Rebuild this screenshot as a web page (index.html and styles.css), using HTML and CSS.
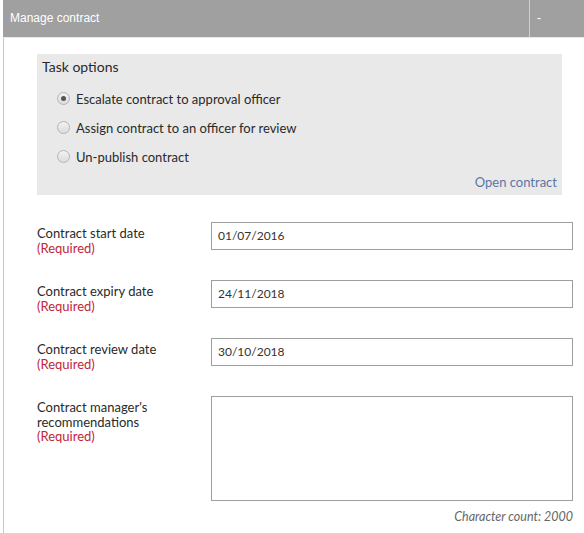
FILE: index.html
```html
<!DOCTYPE html>
<html>
<head>
<meta charset="utf-8">
<link rel="stylesheet" href="styles.css">
</head>
<body>
<div class="page">
  <div class="header">
    <div class="title">Manage contract</div>
    <div class="toggle">-</div>
  </div>
  <div class="content">
    <div class="panel">
      <div class="panel-title">Task options</div>
      <label class="option"><span class="radio checked"></span>Escalate contract to approval officer</label>
      <label class="option"><span class="radio"></span>Assign contract to an officer for review</label>
      <label class="option"><span class="radio"></span>Un-publish contract</label>
      <div class="panel-foot"><a class="link">Open contract</a></div>
    </div>
    <div class="rows">
      <div class="row">
        <div class="label">Contract start date<div class="req">(Required)</div></div>
        <div class="field">01/07/2016</div>
      </div>
      <div class="row">
        <div class="label">Contract expiry date<div class="req">(Required)</div></div>
        <div class="field">24/11/2018</div>
      </div>
      <div class="row">
        <div class="label">Contract review date<div class="req">(Required)</div></div>
        <div class="field">30/10/2018</div>
      </div>
      <div class="row row-area">
        <div class="label">Contract manager's<br>recommendations<div class="req">(Required)</div></div>
        <div class="field area"></div>
      </div>
    </div>
    <div class="count">Character count: 2000</div>
  </div>
</div>
</body>
</html>
```
FILE: styles.css
```css
html, body {
  margin: 0;
  padding: 0;
  background: #fff;
}
.page {
  margin-left: 3px;
  border-left: 1px solid #c8c8c8;
  min-height: 533px;
  font-family: Lato, "Liberation Sans", sans-serif;
  color: #2a2a2a;
}
.header {
  display: flex;
  height: 38px;
  background: #a0a0a0;
  margin-left: -1px;
  border-bottom: 1px solid #e8e8e8;
  box-sizing: border-box;
}
.title {
  flex: 1;
  font-family: "Liberation Sans", Arial, sans-serif;
  font-size: 12px;
  color: #fff;
  line-height: 37px;
  padding-left: 7px;
}
.toggle {
  width: 55px;
  border-left: 1px solid #d0d0d0;
  color: #fff;
  font-family: "Liberation Sans", Arial, sans-serif;
  font-size: 12px;
  line-height: 37px;
  padding-left: 7px;
  box-sizing: border-box;
}
.content {
  padding: 16px 11px 0 33px;
}
.panel {
  width: 525px;
  height: 141px;
  background: #e9e9e9;
  box-sizing: border-box;
  padding: 4px 5px 0 5px;
  display: flex;
  flex-direction: column;
}
.panel-title {
  font-size: 14px;
  line-height: 17px;
  margin-bottom: 9px;
}
.option {
  display: flex;
  align-items: center;
  height: 29px;
  padding-left: 15px;
  font-size: 13px;
}
.radio {
  width: 11px;
  height: 11px;
  border-radius: 50%;
  border: 1px solid #b4b4b4;
  background: linear-gradient(#f2f2f2, #dcdcdc);
  margin-right: 6px;
  position: relative;
  flex: none;
}
.radio.checked::after {
  content: "";
  position: absolute;
  left: 3px;
  top: 3px;
  width: 5px;
  height: 5px;
  border-radius: 50%;
  background: #555;
}
.panel-foot {
  margin-top: auto;
  text-align: right;
  padding-bottom: 5px;
}
.link {
  color: #5b77a3;
  font-size: 13px;
}
.rows {
  display: flex;
  flex-direction: column;
  gap: 30px;
  margin-top: 27px;
}
.row {
  display: flex;
  align-items: flex-start;
  height: 28px;
}
.row-area {
  height: 105px;
}
.label {
  width: 174px;
  font-size: 13px;
  line-height: 14.5px;
  padding-top: 4px;
}
.req {
  color: #c0263c;
}
.field {
  width: 362px;
  height: 28px;
  border: 1px solid #9e9e9e;
  box-sizing: border-box;
  font-size: 12px;
  line-height: 26px;
  padding-left: 6px;
  color: #333;
}
.field.area {
  height: 105px;
}
.count {
  width: 536px;
  text-align: right;
  font-style: italic;
  font-size: 12.5px;
  color: #666;
  margin-top: 8px;
}
```
